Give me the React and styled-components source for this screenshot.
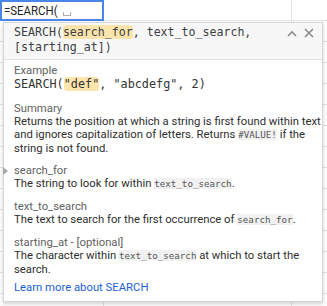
import React from "react";
import styled, { createGlobalStyle } from "styled-components";

const GlobalStyle = createGlobalStyle`
  html, body {
    margin: 0;
    padding: 0;
    background: #fff;
  }
  body {
    font-family: Roboto, "Liberation Sans", Arial, sans-serif;
  }
`;

const Sheet = styled.div`
  width: 327px;
  height: 306px;
  overflow: hidden;
  background-color: #fff;
  background-image:
    linear-gradient(to right, transparent 103px, #e2e2e2 103px, #e2e2e2 104px, transparent 104px),
    linear-gradient(to right, transparent 291px, #e2e2e2 291px, #e2e2e2 292px, transparent 292px),
    repeating-linear-gradient(to bottom, transparent 0, transparent 20px, #e2e2e2 20px, #e2e2e2 21px);
`;

const CellEditor = styled.div`
  box-sizing: border-box;
  width: 104px;
  height: 21px;
  border: 2px solid #4a86e8;
  background: #fff;
  display: flex;
  align-items: center;
  padding-left: 2px;
  font-family: Roboto, "Liberation Sans", sans-serif;
  font-size: 13px;
  color: #222;
`;

const EditorText = styled.span`
  display: inline-block;
  transform: scaleX(0.88);
  transform-origin: left center;
`;

const Caret = styled.span`
  display: inline-block;
  width: 6px;
  height: 3px;
  margin-left: -2px;
  margin-top: 7px;
  border: 1px solid #b0b0b0;
  border-top: none;
`;

const Popup = styled.div`
  position: relative;
  box-sizing: border-box;
  width: 320px;
  height: 280px;
  margin: 1px 0 0 3px;
  background: #fff;
  border: 1px solid #d6d6d6;
  box-shadow: 0 2px 4px rgba(0, 0, 0, 0.18);
`;

const Header = styled.div`
  display: flex;
  align-items: flex-start;
  background: #f7f7f7;
  border-bottom: 1px solid #e3e3e3;
  padding: 2px 8px 4px 10px;
`;

const Signature = styled.div`
  flex: 1;
  padding-right: 24px;
  font-family: "DejaVu Sans Mono", "Liberation Mono", monospace;
  font-size: 11.6px;
  line-height: 15px;
  color: #3c4043;
`;

const Mark = styled.span`
  background: #fce5ad;
  border-radius: 3px;
`;

const Actions = styled.div`
  display: flex;
  align-items: center;
  gap: 7px;
  padding-top: 3px;
`;

const IconButton = styled.span`
  display: flex;
  color: #8a8a8a;
`;

const Body = styled.div`
  display: flex;
  flex-direction: column;
  gap: 9.2px;
  padding: 4px 0 0 10px;
`;

const Section = styled.div`
  position: relative;
  display: flex;
  flex-direction: column;
`;

const Label = styled.div`
  font-size: 11.3px;
  line-height: 13.4px;
  color: #616161;
`;

const Text = styled.div`
  font-size: 11.3px;
  line-height: 13.3px;
  color: #2e2e2e;
`;

const Example = styled.div`
  font-family: "DejaVu Sans Mono", "Liberation Mono", monospace;
  font-size: 11.8px;
  line-height: 15px;
  color: #333;
`;

const Code = styled.code`
  font-family: "DejaVu Sans Mono", "Liberation Mono", monospace;
  font-size: 9.2px;
  background: #f1f1f1;
  color: #555;
`;

const Marker = styled.span`
  position: absolute;
  left: -11px;
  top: 3px;
  width: 0;
  height: 0;
  border-left: 5px solid #a8a8a8;
  border-top: 4px solid transparent;
  border-bottom: 4px solid transparent;
`;

const LearnMore = styled.a`
  margin-top: -4px;
  font-size: 11.3px;
  line-height: 13.4px;
  color: #1a5fd6;
  text-decoration: none;
`;

const ChevronUp = () => (
  <svg width="10" height="7" viewBox="0 0 10 7">
    <path d="M1 6 L5 2 L9 6" fill="none" stroke="currentColor" strokeWidth="1.6" />
  </svg>
);

const Close = () => (
  <svg width="10" height="10" viewBox="0 0 10 10">
    <path d="M1 1 L9 9 M9 1 L1 9" fill="none" stroke="currentColor" strokeWidth="1.6" />
  </svg>
);

export default function App() {
  return (
    <>
      <GlobalStyle />
      <Sheet>
        <CellEditor>
          <EditorText>=SEARCH(</EditorText>
          <Caret />
        </CellEditor>
        <Popup>
          <Header>
            <Signature>
              SEARCH(<Mark>search_for</Mark>, text_to_search, [starting_at])
            </Signature>
            <Actions>
              <IconButton>
                <ChevronUp />
              </IconButton>
              <IconButton>
                <Close />
              </IconButton>
            </Actions>
          </Header>
          <Body>
            <Section>
              <Label>Example</Label>
              <Example>
                SEARCH(<Mark>"def"</Mark>, "abcdefg", 2)
              </Example>
            </Section>
            <Section>
              <Label>Summary</Label>
              <Text>
                Returns the position at which a string is first found within text
                and ignores capitalization of letters. Returns <Code>#VALUE!</Code> if
                the string is not found.
              </Text>
            </Section>
            <Section>
              <Marker />
              <Label>search_for</Label>
              <Text>
                The string to look for within <Code>text_to_search</Code>.
              </Text>
            </Section>
            <Section>
              <Label>text_to_search</Label>
              <Text>
                The text to search for the first occurrence of <Code>search_for</Code>.
              </Text>
            </Section>
            <Section>
              <Label>starting_at - [optional]</Label>
              <Text>
                The character within <Code>text_to_search</Code> at which to start the
                search.
              </Text>
            </Section>
            <LearnMore href="#">Learn more about SEARCH</LearnMore>
          </Body>
        </Popup>
      </Sheet>
    </>
  );
}
